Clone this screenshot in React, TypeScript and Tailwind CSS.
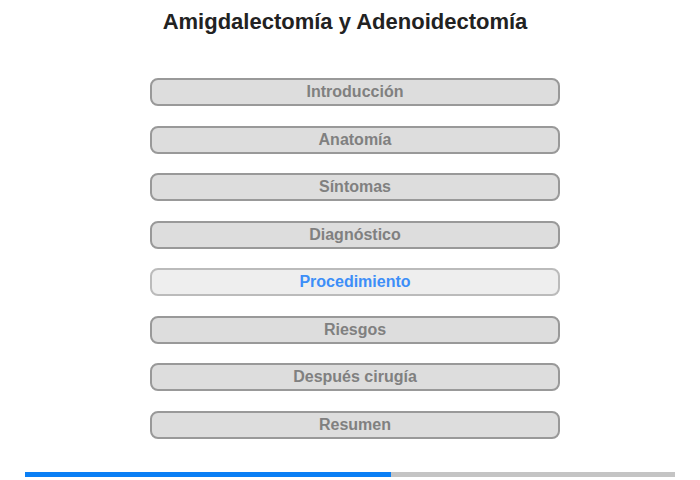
const sections = [
  "Introducción",
  "Anatomía",
  "Síntomas",
  "Diagnóstico",
  "Procedimiento",
  "Riesgos",
  "Después cirugía",
  "Resumen",
];

const active = 4;

export default function App() {
  return (
    <div className="w-[700px] h-[480px] bg-white font-['Liberation_Sans',Arial,sans-serif]">
      <h1 className="pt-[9px] pr-[10px] text-center text-[22px] leading-[26px] font-bold text-[#222]">
        Amigdalectomía y Adenoidectomía
      </h1>

      <div className="mt-[43px] ml-[150px] w-[410px] flex flex-col gap-[19.5px]">
        {sections.map((s, i) => (
          <div
            key={s}
            className={
              i === active
                ? "h-[28px] rounded-[8px] border-2 border-[#bbb] bg-[#eee] text-[#3d8ef8] flex items-center justify-center text-[16px] font-bold"
                : "h-[28px] rounded-[8px] border-2 border-[#999] bg-[#ddd] text-[#808080] flex items-center justify-center text-[16px] font-bold"
            }
          >
            {s}
          </div>
        ))}
      </div>

      <div className="mt-[33px] mx-[25px] h-[5px] flex bg-[#c4c4c4]">
        <div className="w-[366px] bg-[#0a7ff5]" />
      </div>
    </div>
  );
}
